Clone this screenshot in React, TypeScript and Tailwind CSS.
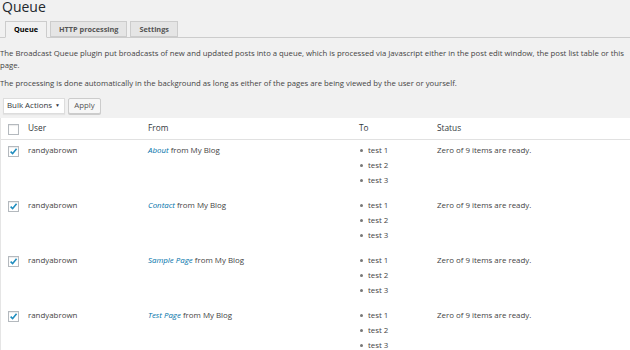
import React from "react";

const rows = [
  { link: "About" },
  { link: "Contact" },
  { link: "Sample Page" },
  { link: "Test Page" },
];

function Check({ checked }: { checked?: boolean }) {
  return (
    <div className="w-[11px] h-[11px] border border-[#b4b9be] bg-white flex items-center justify-center shadow-[inset_0_1px_1px_rgba(0,0,0,0.08)]">
      {checked && (
        <svg width="9" height="9" viewBox="0 0 10 10">
          <path d="M1.8 5.2 L4 7.4 L8.4 2" fill="none" stroke="#1e8cbe" strokeWidth="1.8" />
        </svg>
      )}
    </div>
  );
}

export default function App() {
  return (
    <div
      className="w-[630px] h-[350px] overflow-hidden bg-[#f1f1f1] text-[#444] text-[7.9px]"
      style={{ fontFamily: '"Open Sans", sans-serif' }}
    >
      <h1 className="text-[14px] leading-[18px] text-[#23282d] pl-[2px] mt-[-2px]">Queue</h1>
      <div className="mt-[5px] flex gap-[3px] pl-[5px] border-b border-[#ccc] h-[17px]">
        <div className="h-[17px] px-[8px] border border-[#ccc] border-b-[#f1f1f1] bg-[#f1f1f1] font-bold text-black text-[7.3px] leading-[15px]">
          Queue
        </div>
        <div className="h-[16px] px-[8px] border border-[#ccc] bg-[#e5e5e5] font-bold text-[#555] text-[7.3px] leading-[14px]">
          HTTP processing
        </div>
        <div className="h-[16px] px-[8px] border border-[#ccc] bg-[#e5e5e5] font-bold text-[#555] text-[7.3px] leading-[14px]">
          Settings
        </div>
      </div>
      <p className="mt-[9px] leading-[12px] text-[7.75px]">
        The Broadcast Queue plugin put broadcasts of new and updated posts into a queue, which is processed via Javascript either in the post edit window, the post list table or this page.
      </p>
      <p className="mt-[6px] leading-[12px] text-[7.75px]">
        The processing is done automatically in the background as long as either of the pages are being viewed by the user or yourself.
      </p>
      <div className="mt-[9px] flex gap-[3px] pl-[3px]">
        <div className="w-[62px] h-[16px] bg-white border border-[#ddd] shadow-[0_1px_1px_rgba(0,0,0,0.05)] flex items-center justify-between pl-[3px] pr-[4px] text-[#32373c]">
          <span>Bulk Actions</span>
          <span className="text-[5px]">▼</span>
        </div>
        <div className="w-[33px] h-[16px] bg-[#f7f7f7] border border-[#ccc] rounded-[2px] shadow-[0_1px_0_#ccc] flex items-center justify-center text-[#555]">
          Apply
        </div>
      </div>
      <div className="mt-[4px] bg-white border-l border-[#e5e5e5] h-[300px]">
        <div className="flex items-center h-[22px] border-b border-[#e1e1e1] text-[8.3px] text-[#32373c]">
          <div className="w-[27px] pl-[7px] pt-[1px]">
            <Check />
          </div>
          <div className="w-[120px]">User</div>
          <div className="w-[211px]">From</div>
          <div className="w-[78px]">To</div>
          <div>Status</div>
        </div>
        {rows.map((r) => (
          <div key={r.link} className="flex h-[55px] pt-[3px]">
            <div className="w-[27px] pl-[7px] pt-[3px]">
              <Check checked />
            </div>
            <div className="w-[120px] leading-[15px]">randyabrown</div>
            <div className="w-[211px] leading-[15px]">
              <span className="italic text-[#0073aa]">{r.link}</span> from My Blog
            </div>
            <div className="w-[78px] leading-[15px]">
              {["test 1", "test 2", "test 3"].map((t) => (
                <div key={t} className="flex items-center">
                  <span className="w-[3px] h-[3px] rounded-full bg-[#777] ml-[1px] mr-[5px]" />
                  <span>{t}</span>
                </div>
              ))}
            </div>
            <div className="leading-[15px]">Zero of 9 items are ready.</div>
          </div>
        ))}
      </div>
    </div>
  );
}
